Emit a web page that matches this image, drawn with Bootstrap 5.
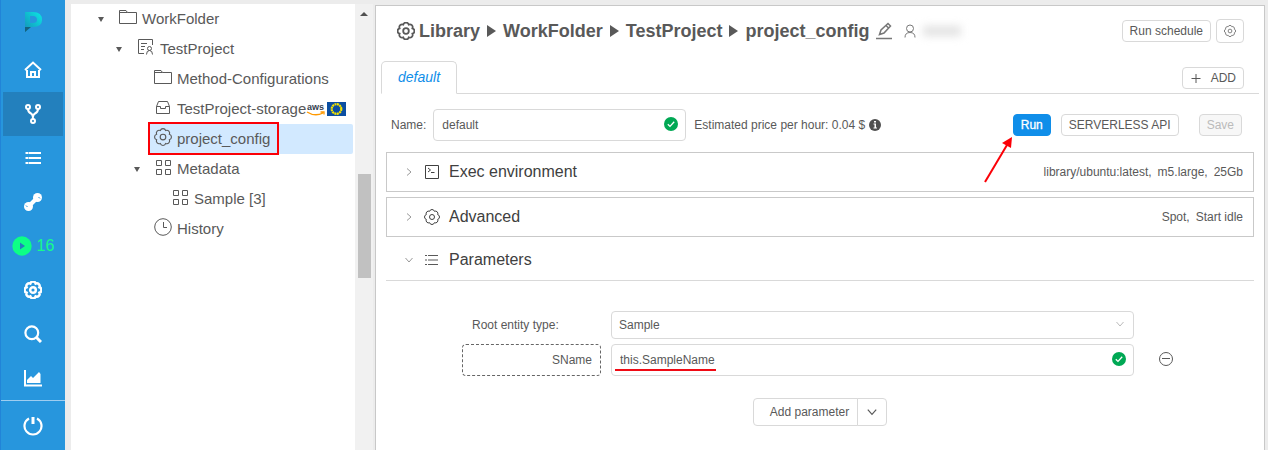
<!DOCTYPE html>
<html lang="en">
<head>
<meta charset="utf-8">
<meta name="viewport" content="width=device-width, initial-scale=1">
<title>project_config</title>
<link href="https://cdn.jsdelivr.net/npm/bootstrap@5.3.0/dist/css/bootstrap.min.css" rel="stylesheet">
<style>
body{font-family:"Liberation Sans",Arial,sans-serif;font-size:12px;line-height:18px;color:#595959;background:#ececec}
svg{display:block;flex:none}
.ln{fill:none;stroke:currentColor;stroke-width:1}
.bold-ln{stroke-width:1.6}
a{color:inherit;text-decoration:none}
.side{width:65px;background:#2796dd;border-left:1px solid #2184d8;color:#fff;flex:none}
.side a{height:44px;margin:0 2px;display:flex;align-items:center;justify-content:center}
.side .on{background:#2380bd}
.side .runs{color:#17fb8b;font-size:16px;gap:5px}
.side .rule{border-top:1px solid #9fcdf0;padding-top:3px}
.tree{width:284px;background:#fff;flex:none;font-size:15px;margin-left:6px}
.tree a{display:flex;align-items:center;height:30px;position:relative}
.tree .ico{margin-right:5px;position:relative;bottom:2px}
.tree .sel{background:#d2e9ff;border-radius:2px;margin-right:2px}
.caret{width:0;border:3px solid transparent;border-top:5px solid #595959;border-bottom:0;margin:0 15px 0 1px}
.lv1{padding-left:26px}.lv2{padding-left:44px}.lv3{padding-left:62px}.lv4{padding-left:101px}
.leaf{padding-left:83px}
.sel.leaf{margin-left:77px;padding-left:6px}
.redbox{position:absolute;left:0;top:-2px;width:131px;height:33px;border:2px solid #fb0007}
.flag{margin-left:2px}
.scroll{width:18px;background:#f1f1f1;flex:none;padding:0 3px}
.scroll .up{border:4px solid transparent;border-bottom:4px solid #505050;border-top:0;width:8px;margin:8px auto 0 2px}
.scroll .thumb{height:104px;width:13px;background:#c1c1c1;margin-top:158px}
.pane{background:#fff;border:1px solid #c8c8c8;margin:5px 3px 0 2px;border-bottom:0;padding:0 5px;min-width:0}
.pane header{padding:13px 15px 0 16px}
.crumbs{font-size:18px;font-weight:700;line-height:24px;gap:7px}
.crumbs i{border:6px solid transparent;border-left:9px solid #595959;border-right:0;width:9px}
.gray{color:#777}
.hid{width:38px;height:10px;background:#e2e2e2;filter:blur(4px)}
.btn{--bs-btn-font-size:12px;--bs-btn-line-height:18px;--bs-btn-padding-y:1px;--bs-btn-padding-x:7px;--bs-btn-border-radius:4px;--bs-btn-border-color:#d9d9d9;--bs-btn-color:#595959;--bs-btn-bg:#fff;--bs-btn-disabled-bg:#f7f7f7;--bs-btn-disabled-color:#bbb;--bs-btn-disabled-border-color:#d9d9d9;--bs-btn-disabled-opacity:1}
.btn-cfg{margin-left:5px}
.btn-run{--bs-btn-bg:#108ee9;--bs-btn-color:#fff;--bs-btn-border-color:#108ee9;-webkit-text-stroke:.3px #fff}
.nav-tabs{--bs-nav-tabs-border-color:#d9d9d9;--bs-nav-tabs-border-radius:5px;--bs-nav-tabs-link-active-border-color:#d9d9d9 #d9d9d9 #fff;--bs-nav-tabs-link-active-color:#108ee9;--bs-nav-link-padding-x:16px;--bs-nav-link-padding-y:6px}
.nav-tabs .nav-link{font-size:14px;line-height:19px;font-style:italic}
.tabs{margin-top:18px}
.tabs .add{position:absolute;right:15px;bottom:5px;gap:9px}
.body-col{padding:0 5px}
.name-row{height:58px;padding:4px 12px 0 5px}
.name-row .nm{width:253px;margin:0 8px 0 7px}
.name-row .api{margin:0 20px 0 10px}
.form-control,.form-select{font-size:12px;line-height:18px;padding:6px 8px;border:1px solid #d9d9d9;border-radius:4px;color:#595959}
.form-select{padding:4px 7px;background:#fff}
.tick{position:absolute;right:8px;top:8px}
.down{position:absolute;right:9px;top:8px;color:#bbb;pointer-events:none}
.panel-row{border:1px solid #c9c9c9;height:40px;padding:0 10px 0 17px}
.panel-row+.panel-row{margin-top:5px}
.panel-row h2,.open-row h2{font-size:16px;font-weight:400;line-height:20px;margin:0 auto 0 9px;color:#404040}
.panel-row .sec{color:#404040}
.open-row{border-bottom:1px solid #d9d9d9;height:44px;padding:3px 18px 0;margin-bottom:30px}
.chev{margin-right:10px;color:#999}
.params{display:grid;grid-template-columns:66fr 139fr 523fr 110fr;gap:5px 10px;align-items:center}
.params>*{grid-column:3}
.params>.lab{grid-column:2}
.params>label{padding-left:10px}
.params>.del{grid-column:4;padding:0 0 2px 14px}
.dashed{border:1px dashed #666;text-align:right}
.redline{position:absolute;left:4px;top:25px;width:101px;height:2px;background:#f00a14}
.pointer{position:absolute;right:100%;top:22px}
.addp{margin-top:22px}
.addp .btn{padding:4px 8px}
.addp .btn:first-child{padding-left:16px}
</style>
</head>
<body>
<svg width="0" height="0" class="position-absolute" aria-hidden="true">
<symbol id="gear" viewBox="0 0 16 16"><path d="M13.700 5.600A2.500 2.500 0 0 1 13.700 10.400A2.500 2.500 0 0 1 10.400 13.700A2.500 2.500 0 0 1 5.600 13.700A2.500 2.500 0 0 1 2.300 10.400A2.500 2.500 0 0 1 2.300 5.600A2.500 2.500 0 0 1 5.600 2.300A2.500 2.500 0 0 1 10.400 2.300A2.500 2.500 0 0 1 13.700 5.600Z"/><circle cx="8" cy="8" r="2.500"/></symbol>
<symbol id="folder" viewBox="0 0 18 16"><path d="M.5 14.500V1.500H7L8.500 3.500H17.500V14.500ZM1 3.500H8.500"/></symbol>
<symbol id="grid" viewBox="0 0 17 17"><path d="M1.500 1.500h5v5h-5zM10.500 1.500h5v5h-5zM1.500 10.500h5v5h-5zM10.500 10.500h5v5h-5z"/></symbol>
<symbol id="list" viewBox="0 0 16 14"><path d="M4 2.500H14M4 7H14M4 11.500H14M1 2.500h2M1 7h2M1 11.500h2"/></symbol>
<symbol id="check" viewBox="0 0 14 14"><circle cx="7" cy="7" r="7" fill="#00a854"/><path d="M3.800 7.200 6 9.400 10.200 4.800" fill="none" stroke="#fff" stroke-width="1.300"/></symbol>
<symbol id="chev-r" viewBox="0 0 10 10"><path d="M3 1.500 7 5 3 8.500"/></symbol>
<symbol id="chev-d" viewBox="0 0 10 10"><path d="M1.500 3 5 7 8.500 3"/></symbol>
</svg>

<div class="d-flex vh-100 overflow-hidden">
<nav class="side d-flex flex-column" aria-label="Main">
  <a href="#" aria-label="Home page" class="mb-1"><svg width="18" height="20" viewBox="0 0 18 20"><defs><linearGradient id="lg" x1="0" y1="1" x2="1" y2="0"><stop offset="0" stop-color="#1590b8"/><stop offset="1" stop-color="#0be8e4"/></linearGradient></defs><path fill="url(#lg)" fill-rule="evenodd" d="M1 0H9Q18 0 18 8Q18 15 9 15H7L1 20ZM6 4V11H9Q13 11 13 8Q13 4 9 4Z"/><path fill="#14627f" d="M1 15H7L1 20Z"/></svg></a>
  <a href="#" aria-label="Dashboard"><svg width="18" height="18" viewBox="0 0 18 18" fill="none" stroke="#fff" stroke-width="2"><path d="M1 9 9 1.500l8 7.500M3 9V16H15V9M7 16V11H11V16"/></svg></a>
  <a href="#" class="on" aria-label="Library"><svg width="16" height="20" viewBox="0 0 16 20" fill="none" stroke="#fff" stroke-width="2"><circle cx="3" cy="3" r="2"/><circle cx="13" cy="3" r="2"/><circle cx="8" cy="17" r="2"/><path d="M3 5Q3 8 6 9.500Q8 10.500 8 15M13 5Q13 8 10 9.500Q8 10.500 8 13"/></svg></a>
  <a href="#" aria-label="Lists"><svg width="16" height="14" viewBox="0 0 16 14" fill="none" stroke="#fff" stroke-width="2"><path d="M4 2H16M4 7H16M4 12H16M.5 2h3M.5 7h3M.5 12h3"/></svg></a>
  <a href="#" aria-label="Tools"><svg width="18" height="18" viewBox="0 0 18 18"><path d="M5 13 13 5" stroke="#fff" stroke-width="4"/><circle cx="4.500" cy="13.500" r="4.500" fill="#fff"/><circle cx="13.500" cy="4.500" r="4.500" fill="#fff"/><path d="M2 12.500 3.500 14M14.500 4 16 5.500" stroke="#2796dd"/></svg></a>
  <a href="#" class="runs"><svg width="20" height="20" viewBox="0 0 20 20"><circle cx="10" cy="10" r="9.700" fill="#0dff86"/><path fill="#2380bd" d="M8 6.500V13.500L13 10Z"/></svg>16</a>
  <a href="#" aria-label="Settings"><svg width="18" height="18" viewBox="0 0 16 16" fill="none" stroke="#fff" stroke-width="2.200"><use href="#gear"/></svg></a>
  <a href="#" aria-label="Search"><svg width="18" height="18" viewBox="0 0 18 18" fill="none" stroke="#fff" stroke-width="2.200"><circle cx="7.800" cy="7.800" r="6.400"/><path d="M12 12 17 17" stroke-width="3"/></svg></a>
  <a href="#" aria-label="Reports"><svg width="18" height="18" viewBox="0 0 18 18" fill="#fff"><path d="M0 1H2V15.500H18V17.500H0ZM3 14V11L7 7 9 9 15 3 16.500 5V14Z"/></svg></a>
  <div class="rule"><a href="#" aria-label="Log out"><svg width="20" height="20" viewBox="0 0 20 20" fill="none" stroke="#fff" stroke-width="2.200"><path d="M6 2.500A8.500 8.500 0 1 0 14 2.500"/><path d="M10 1V8" stroke-width="3"/></svg></a></div>
</nav>

<aside class="tree mt-1" aria-label="Library tree">
  <a href="#" class="lv1"><span class="caret"></span><svg class="ico ln" width="18" height="16"><use href="#folder"/></svg>WorkFolder</a>
  <a href="#" class="lv2"><span class="caret"></span><svg class="ico ln" width="18" height="18" viewBox="0 0 18 18"><path d="M7 15.500H1.500V1.500H15.500V7M4 5.500H10M4 8.500H8M4 11.500H7"/><circle cx="12.500" cy="10.500" r="2"/><path d="M9.500 16.500Q9.500 12.500 12.500 12.500T15.500 16.500"/></svg>TestProject</a>
  <a href="#" class="leaf"><svg class="ico ln" width="18" height="16"><use href="#folder"/></svg>Method-Configurations</a>
  <a href="#" class="leaf"><svg class="ico ln" width="18" height="16" viewBox="0 0 18 16"><path d="M2.500 7.500 4.500 2.500H13.500L15.500 7.500V14.500H2.500ZM2.500 7.500H6.500V9.500H11.500V7.500H15.500"/></svg>TestProject-storage<svg width="19" height="18" viewBox="0 0 19 18" role="img" aria-label="aws"><text x="1" y="10" font-size="9" font-weight="700" fill="#35404f">aws</text><path d="M1 12Q9 17 17 13M14.500 12H18V14.500" fill="none" stroke="#f90" stroke-width="1.300"/></svg><svg class="flag" width="19" height="14" viewBox="0 0 19 14" aria-hidden="true"><path fill="#0b4ea2" d="M0 0H19V14H0Z"/><circle cx="9.500" cy="7" r="4.800" fill="none" stroke="#f5e400" stroke-width="2.200" stroke-dasharray="2 .5"/></svg></a>
  <a href="#" class="leaf sel"><svg class="ico ln" width="18" height="18"><use href="#gear"/></svg>project_config<span class="redbox"></span></a>
  <a href="#" class="lv3"><span class="caret"></span><svg class="ico ln" width="17" height="17"><use href="#grid"/></svg>Metadata</a>
  <a href="#" class="lv4"><svg class="ico ln" width="17" height="17"><use href="#grid"/></svg>Sample [3]</a>
  <a href="#" class="leaf"><svg class="ico ln" width="18" height="18" viewBox="0 0 18 18"><circle cx="9" cy="9" r="8.300"/><path d="M9.500 4V9.500H13"/></svg>History</a>
</aside>
<div class="scroll mt-1" aria-hidden="true"><div class="up"></div><div class="thumb"></div></div>

<main class="pane flex-grow-1">
  <header class="d-flex align-items-center">
    <div class="crumbs d-flex align-items-center me-auto">
      <div class="d-flex align-items-center gap-1"><svg class="ln bold-ln" width="18" height="18"><use href="#gear"/></svg><a href="#">Library</a></div><i></i><a href="#">WorkFolder</a><i></i><a href="#">TestProject</a><i></i><span>project_config</span>
      <a href="#" class="gray" aria-label="Rename"><svg class="ln" width="17" height="18" viewBox="0 0 17 18"><path d="M0 16.500H16" stroke-width="1.500"/><path stroke-width="1.500" d="M3.500 12.500 5 8 12 1.500 14.500 4 8 11ZM10 3.500 12.500 6"/></svg></a>
      <svg class="ln gray ms-1" width="12" height="14" viewBox="0 0 12 14"><circle cx="6" cy="4.500" r="3.500"/><path d="M1 13.500Q1 8.500 6 8.500T11 13.500"/></svg>
      <span class="hid"></span>
    </div>
    <button type="button" class="btn">Run schedule</button>
    <button type="button" class="btn btn-cfg" aria-label="Configure"><svg class="ln my-1" width="12" height="12" viewBox="0 0 16 16"><use href="#gear"/></svg></button>
  </header>
  <div class="tabs position-relative">
    <ul class="nav nav-tabs"><li class="nav-item"><a class="nav-link active" href="#">default</a></li></ul>
    <button type="button" class="btn add d-flex align-items-center"><svg class="ln" width="12" height="12" viewBox="0 0 12 12"><path d="M1.500 6.500H10.500M6 2V11"/></svg>ADD</button>
  </div>
  <div class="body-col">
  <div class="d-flex align-items-center name-row">
    <label for="nm">Name:</label>
    <div class="position-relative nm"><input id="nm" class="form-control" value="default"><svg class="tick" width="14" height="14"><use href="#check"/></svg></div>
    <span class="me-1">Estimated price per hour: 0.04 $</span>
    <svg width="12" height="12" viewBox="0 0 12 12"><circle cx="6" cy="6" r="6" fill="#505050"/><path fill="#fff" d="M5 2H7V3.500H5ZM4.500 4.500H7V8.500H8V9.500H4.500V8.500H5.500V5.500H4.500Z"/></svg>
    <div class="ms-auto position-relative"><button type="button" class="btn btn-run">Run</button>
      <svg class="pointer" width="30" height="48" viewBox="0 0 30 48" aria-hidden="true"><path d="M2 46 24 9" stroke="#fb0007" stroke-width="2"/><path fill="#fb0007" d="M29 1 28 12 19 7Z"/></svg></div>
    <button type="button" class="btn api">SERVERLESS API</button>
    <button type="button" class="btn" disabled>Save</button>
  </div>
  <section class="panel-row d-flex align-items-center"><svg class="ln chev" width="10" height="10"><use href="#chev-r"/></svg><svg class="ln sec" width="16" height="16" viewBox="0 0 16 16"><path d="M1.500 1.500H14.500V14.500H1.500ZM4 4 6.500 6 4 8M7 8.500H10.500"/></svg><h2>Exec environment</h2><span>library/ubuntu:latest,&ensp;m5.large,&ensp;25Gb</span></section>
  <section class="panel-row d-flex align-items-center"><svg class="ln chev" width="10" height="10"><use href="#chev-r"/></svg><svg class="ln sec" width="16" height="16"><use href="#gear"/></svg><h2>Advanced</h2><span>Spot,&ensp;Start idle</span></section>
  <section>
    <div class="open-row d-flex align-items-center"><svg class="ln chev" width="10" height="10"><use href="#chev-d"/></svg><svg class="ln" width="16" height="14"><use href="#list"/></svg><h2>Parameters</h2></div>
    <div class="params">
      <label for="root" class="lab">Root entity type:</label>
      <div class="position-relative"><select id="root" class="form-select"><option>Sample</option></select><svg class="ln down" width="10" height="10"><use href="#chev-d"/></svg></div>
      <input class="lab form-control dashed" aria-label="Parameter name" value="SName">
      <div class="position-relative"><input class="form-control" aria-label="Parameter value" value="this.SampleName"><svg class="tick" width="14" height="14"><use href="#check"/></svg><span class="redline"></span></div>
      <a href="#" class="del" aria-label="Remove parameter"><svg class="ln" width="16" height="16" viewBox="0 0 16 16"><circle cx="8" cy="8" r="6.500"/><path d="M4 7.500H12"/></svg></a>
    </div>
    <div class="d-flex justify-content-center addp"><div class="btn-group"><button type="button" class="btn">Add parameter</button><button type="button" class="btn" aria-label="More"><svg class="ln" width="12" height="12" viewBox="0 0 10 10"><use href="#chev-d"/></svg></button></div></div>
  </section>
  </div>
</main>
</div>
<script src="https://cdn.jsdelivr.net/npm/bootstrap@5.3.0/dist/js/bootstrap.bundle.min.js"></script>
</body>
</html>
